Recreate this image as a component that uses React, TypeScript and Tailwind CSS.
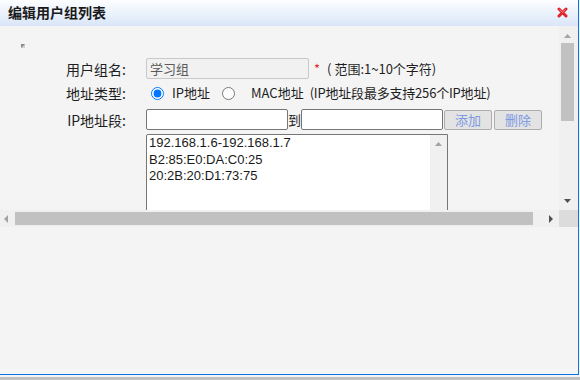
import React from 'react';

const Arrow = ({ dir, fill }: { dir: 'up' | 'down' | 'left' | 'right'; fill: string }) => {
    if (dir === 'up' || dir === 'down') {
        return (
            <svg width="7" height="4" viewBox="0 0 7 4" className="block">
                <polygon points={dir === 'up' ? '0,4 3.5,0 7,4' : '0,0 7,0 3.5,4'} fill={fill} />
            </svg>
        );
    }
    return (
        <svg width="4" height="8" viewBox="0 0 4 8" className="block shrink-0">
            <polygon points={dir === 'left' ? '4,0 0,4 4,8' : '0,0 4,4 0,8'} fill={fill} />
        </svg>
    );
};

const CloseIcon = () => (
    <svg width="11" height="11" viewBox="0 0 11 11" className="ml-auto block">
        <path d="M2 2 L9 9 M9 2 L2 9" stroke="#e0242c" strokeWidth="3" strokeLinecap="round" />
        <path d="M2.5 2.5 L5.5 5.2 L8.5 2.5" stroke="#ff9aa0" strokeWidth="0.8" fill="none" />
    </svg>
);

const Label = ({ children }: { children: React.ReactNode }) => (
    <span className="w-[126px] shrink-0 text-right text-[14px]">{children}</span>
);

const ENTRIES = ['192.168.1.6-192.168.1.7', 'B2:85:E0:DA:C0:25', '20:2B:20:D1:73:75'];

export default function App() {
    return (
        <div className="w-[580px] h-[380px] bg-[#f4f4f4] flex flex-col overflow-hidden font-['Noto_Sans_CJK_SC',sans-serif] text-[13px] leading-[18px] text-[#1e1e1e]">
            <div className="w-[579px] h-[375px] shrink-0 border-r border-b border-[#0b72e7] flex flex-col">
                {/* title bar */}
                <header className="h-[26px] shrink-0 flex items-center pl-[8px] pr-[10px] pb-[2px] bg-linear-to-b from-[#fdfeff] to-[#d9e6f8]">
                    <h1 className="text-[14px] font-bold leading-none text-[#1a1a1a]">编辑用户组列表</h1>
                    <CloseIcon />
                </header>

                {/* scrolled frame */}
                <div className="flex h-[184px] shrink-0">
                    <div className="w-[559px] h-full overflow-hidden">
                        <div className="pt-[18px]">
                            <svg width="4" height="4" viewBox="0 0 4 4" className="ml-[21px] block">
                                <rect width="4" height="4" fill="#d0d0d0" />
                                <polygon points="0,0 4,0 0,4" fill="#8a8a8a" />
                            </svg>

                            <div className="mt-[10px] flex items-center h-[21px]">
                                <Label>用户组名:</Label>
                                <input
                                    readOnly
                                    value="学习组"
                                    className="ml-[20px] w-[163px] h-[21px] px-[3px] border border-[#c9c9c9] rounded-[2px] bg-[#f1f1f1] text-[#5a5a5a] text-[13px] outline-none font-['Noto_Sans_CJK_SC',sans-serif]"
                                />
                                <span className="ml-[5px] text-[#e0302a]">*</span>
                                <span className="ml-[7px]">( 范围:1~10个字符)</span>
                            </div>

                            <div className="mt-[3px] flex items-center h-[22px]">
                                <Label>地址类型:</Label>
                                <input type="radio" name="addrType" defaultChecked className="ml-[25px] w-[13px] h-[13px]" />
                                <span className="ml-[8px]">IP地址</span>
                                <input type="radio" name="addrType" className="ml-[12px] w-[13px] h-[13px]" />
                                <span className="ml-[16px]">MAC地址</span>
                                <span className="ml-[6px] tracking-[-0.2px]">(IP地址段最多支持256个IP地址)</span>
                            </div>

                            <div className="mt-[5px] flex items-center h-[21px]">
                                <Label>IP地址段:</Label>
                                <input className="ml-[20px] w-[142px] h-[21px] border border-[#767676] rounded-[2px] bg-white outline-none" />
                                <span className="w-[13px] shrink-0">到</span>
                                <input className="w-[142px] h-[21px] border border-[#767676] rounded-[2px] bg-white outline-none" />
                                <button className="ml-[1px] w-[48px] h-[20px] border border-[#adadad] rounded-[2px] bg-[#e3e3e3] text-[#7d9ae3] text-[13px] leading-none">
                                    添加
                                </button>
                                <button className="ml-[2px] w-[48px] h-[20px] border border-[#adadad] rounded-[2px] bg-[#e3e3e3] text-[#7d9ae3] text-[13px] leading-none">
                                    删除
                                </button>
                            </div>

                            <div className="mt-[4px] ml-[146px] w-[302px] h-[100px] border border-[#767676] rounded-tl-[2px] bg-white flex">
                                <div className="flex-1 pl-[2px] font-['Liberation_Sans',Arial,sans-serif] text-[13px] leading-[16.6px] text-[#1a1a1a]">
                                    {ENTRIES.map((e) => (
                                        <div key={e}>{e}</div>
                                    ))}
                                </div>
                                <div className="w-[17px] bg-[#f0f0f0] flex justify-center pt-[7px]">
                                    <Arrow dir="up" fill="#a3a3a3" />
                                </div>
                            </div>
                        </div>
                    </div>

                    {/* vertical scrollbar */}
                    <div className="w-[19px] bg-[#f0f0f0] flex flex-col">
                        <div className="h-[17px] pt-[8px] pl-[5px]">
                            <Arrow dir="up" fill="#a3a3a3" />
                        </div>
                        <div className="ml-[2px] w-[13px] h-[78px] bg-[#c1c1c1]" />
                        <div className="flex-1" />
                        <div className="h-[17px] pt-[6px] pl-[5px]">
                            <Arrow dir="down" fill="#505050" />
                        </div>
                    </div>
                </div>

                {/* horizontal scrollbar */}
                <div className="flex h-[17px] shrink-0">
                    <div className="w-[559px] flex items-center bg-[#f0f0f0]">
                        <div className="ml-[4px]">
                            <Arrow dir="left" fill="#a3a3a3" />
                        </div>
                        <div className="ml-[7px] w-[518px] h-[13px] bg-[#c1c1c1]" />
                        <div className="ml-[16px]">
                            <Arrow dir="right" fill="#505050" />
                        </div>
                    </div>
                    <div className="w-[19px] bg-[#dcdcdc]" />
                </div>
            </div>
            <div className="h-[2px] shrink-0" />
            <div className="h-[3px] shrink-0 bg-[#c0c0c0]" />
        </div>
    );
}
